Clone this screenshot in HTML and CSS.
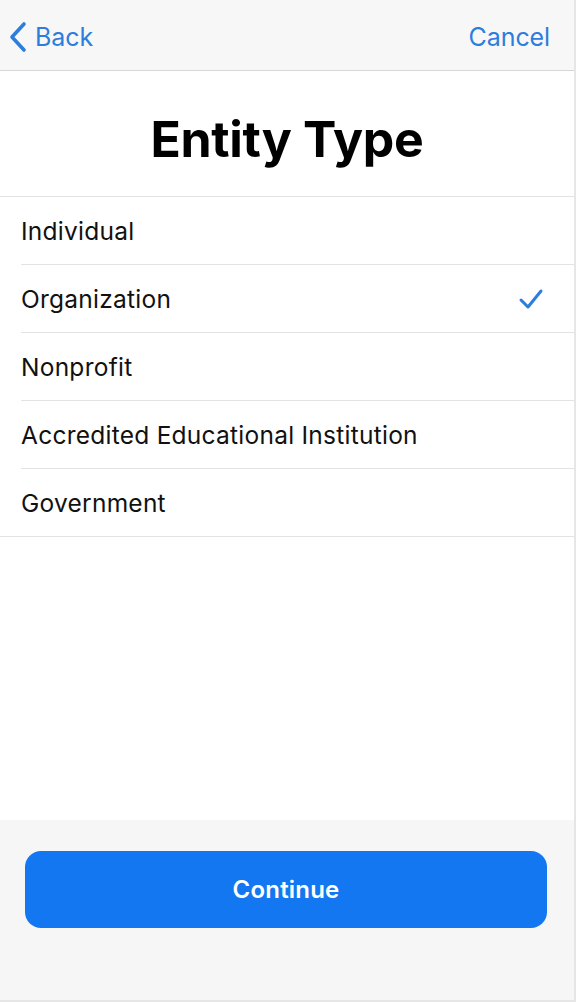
FILE: index.html
```html
<!DOCTYPE html>
<html lang="en">
<head>
    <meta charset="UTF-8">
    <meta name="viewport" content="width=device-width, initial-scale=1.0">
    <title>Entity Type</title>
    <link rel="stylesheet" href="styles.css">
</head>
<body>
    <div class="screen">
        <!-- Navigation Bar -->
        <div class="nav-bar">
            <a class="nav-back" href="#">
                <svg class="chevron" width="20" height="32" viewBox="0 0 20 32">
                    <path d="M16 3 L4 16 L16 29" fill="none" stroke="currentColor" stroke-width="3.6" stroke-linecap="round" stroke-linejoin="round"/>
                </svg>
                <span>Back</span>
            </a>
            <a class="nav-cancel" href="#">Cancel</a>
        </div>

        <!-- Title -->
        <div class="title-area">
            <h1>Entity Type</h1>
        </div>

        <!-- Options -->
        <ul class="option-list">
            <li class="option">Individual</li>
            <li class="option selected">
                <span>Organization</span>
                <svg class="check" width="26" height="22" viewBox="0 0 26 22">
                    <path d="M3 12 L10 19 L23 3" fill="none" stroke="currentColor" stroke-width="3" stroke-linecap="round" stroke-linejoin="round"/>
                </svg>
            </li>
            <li class="option">Nonprofit</li>
            <li class="option">Accredited Educational Institution</li>
            <li class="option">Government</li>
        </ul>

        <div class="spacer"></div>

        <!-- Footer -->
        <div class="footer">
            <button type="button" class="continue-btn">Continue</button>
        </div>
    </div>
</body>
</html>
```

FILE: styles.css
```css
/* General Styles */
body {
    margin: 0;
    padding: 0;
    font-family: Inter, "Noto Sans", Arial, sans-serif;
    background: #fff;
}

.screen {
    height: 1002px;
    box-sizing: border-box;
    display: flex;
    flex-direction: column;
    border-right: 2px solid #e6e6e6;
    border-bottom: 2px solid #e6e6e6;
}

/* Navigation Bar */
.nav-bar {
    height: 71px;
    flex-shrink: 0;
    background: #f7f7f7;
    border-bottom: 1px solid #d6d6d6;
    display: flex;
    align-items: center;
    justify-content: space-between;
    padding: 3px 24px 0 8px;
    box-sizing: border-box;
}

.nav-bar a {
    color: #2d7ddc;
    text-decoration: none;
    font-size: 25px;
    letter-spacing: -0.1px;
}

.nav-back {
    display: flex;
    align-items: center;
    gap: 7px;
}

.chevron {
    display: block;
}

/* Title */
.title-area {
    height: 126px;
    flex-shrink: 0;
    box-sizing: border-box;
    padding-top: 10px;
    display: flex;
    align-items: center;
    justify-content: center;
    border-bottom: 1px solid #e3e3e3;
}

.title-area h1 {
    margin: 0;
    font-size: 50px;
    font-weight: 700;
    letter-spacing: -0.3px;
    color: #000;
}

/* Option List */
.option-list {
    list-style: none;
    margin: 0;
    padding: 0 0 0 21px;
    border-bottom: 1px solid #e3e3e3;
}

.option {
    height: 67px;
    display: flex;
    align-items: center;
    justify-content: space-between;
    padding-right: 30px;
    font-size: 24.5px;
    letter-spacing: 0.25px;
    color: #111;
    border-bottom: 1px solid #e3e3e3;
}

.option:last-child {
    border-bottom: none;
}

.check {
    color: #2d7ddc;
}

.spacer {
    flex: 1;
}

/* Footer */
.footer {
    height: 180px;
    flex-shrink: 0;
    background: #f6f6f6;
    padding: 31px 27px 0 25px;
    box-sizing: border-box;
}

.continue-btn {
    width: 100%;
    height: 77px;
    background: #1477f2;
    color: #fff;
    border: none;
    border-radius: 16px;
    font-family: Inter, "Noto Sans", Arial, sans-serif;
    font-size: 24px;
    font-weight: 600;
    letter-spacing: 0.2px;
    cursor: pointer;
}
```
